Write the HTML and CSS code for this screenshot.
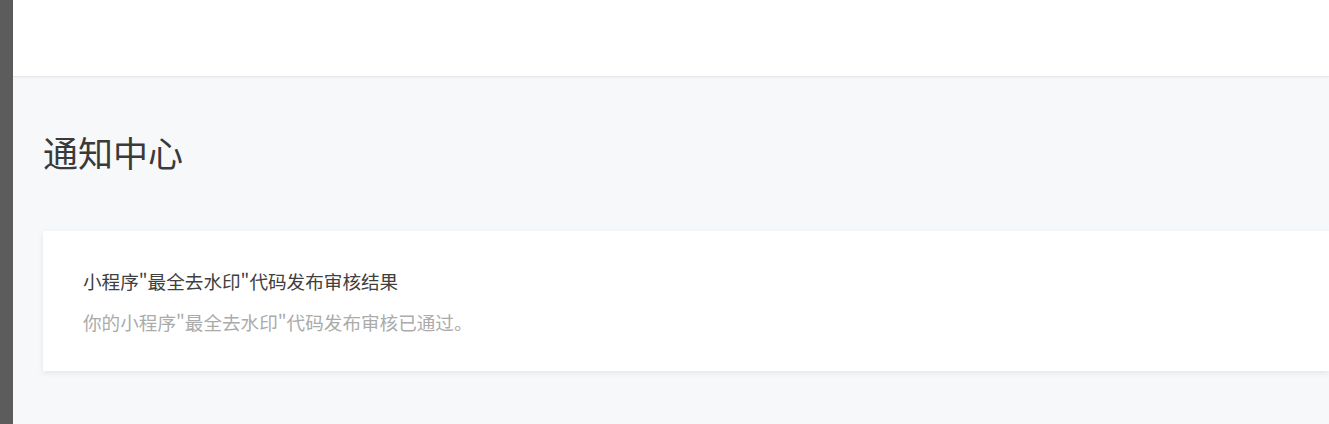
FILE: index.html
```html
<!DOCTYPE html>
<html lang="zh-CN">
<head>
<meta charset="utf-8">
<title>通知中心</title>
<link rel="stylesheet" href="styles.css">
</head>
<body>
<div class="layout">
  <aside class="sidebar"></aside>
  <div class="content">
    <header class="topbar"></header>
    <main class="main">
      <h1 class="page-title">通知中心</h1>
      <section class="notice-card">
        <div class="notice-title">小程序"最全去水印"代码发布审核结果</div>
        <div class="notice-desc">你的小程序"最全去水印"代码发布审核已通过。</div>
      </section>
    </main>
  </div>
</div>
</body>
</html>
```

FILE: styles.css
```css
* { box-sizing: border-box; }
html, body {
  margin: 0;
  padding: 0;
  height: 100%;
  overflow: hidden;
  font-family: "Noto Sans CJK SC", "Noto Sans", sans-serif;
}
.layout {
  display: flex;
  height: 100%;
}
.sidebar {
  width: 13px;
  flex: 0 0 13px;
  background: #5c5c5c;
}
.content {
  flex: 1;
  display: flex;
  flex-direction: column;
  background: #f7f8fa;
  min-width: 0;
}
.topbar {
  height: 77px;
  flex: 0 0 77px;
  background: #ffffff;
  border-bottom: 1px solid #e6e7ea;
  box-shadow: 0 1px 3px rgba(0, 0, 0, 0.04);
}
.main {
  flex: 1;
  padding: 0 0 0 30px;
}
.page-title {
  margin: 54px 0 59px;
  font-size: 35px;
  line-height: 41px;
  font-weight: 400;
  color: #3a3a3a;
}
.notice-card {
  background: #ffffff;
  height: 140px;
  padding: 37px 40px 0;
  box-shadow: 0 2px 6px rgba(0, 0, 0, 0.08);
}
.notice-title {
  font-size: 18.6px;
  line-height: 26px;
  color: #404040;
}
.notice-desc {
  margin-top: 15px;
  font-size: 18.6px;
  line-height: 26px;
  color: #ababab;
}
```
